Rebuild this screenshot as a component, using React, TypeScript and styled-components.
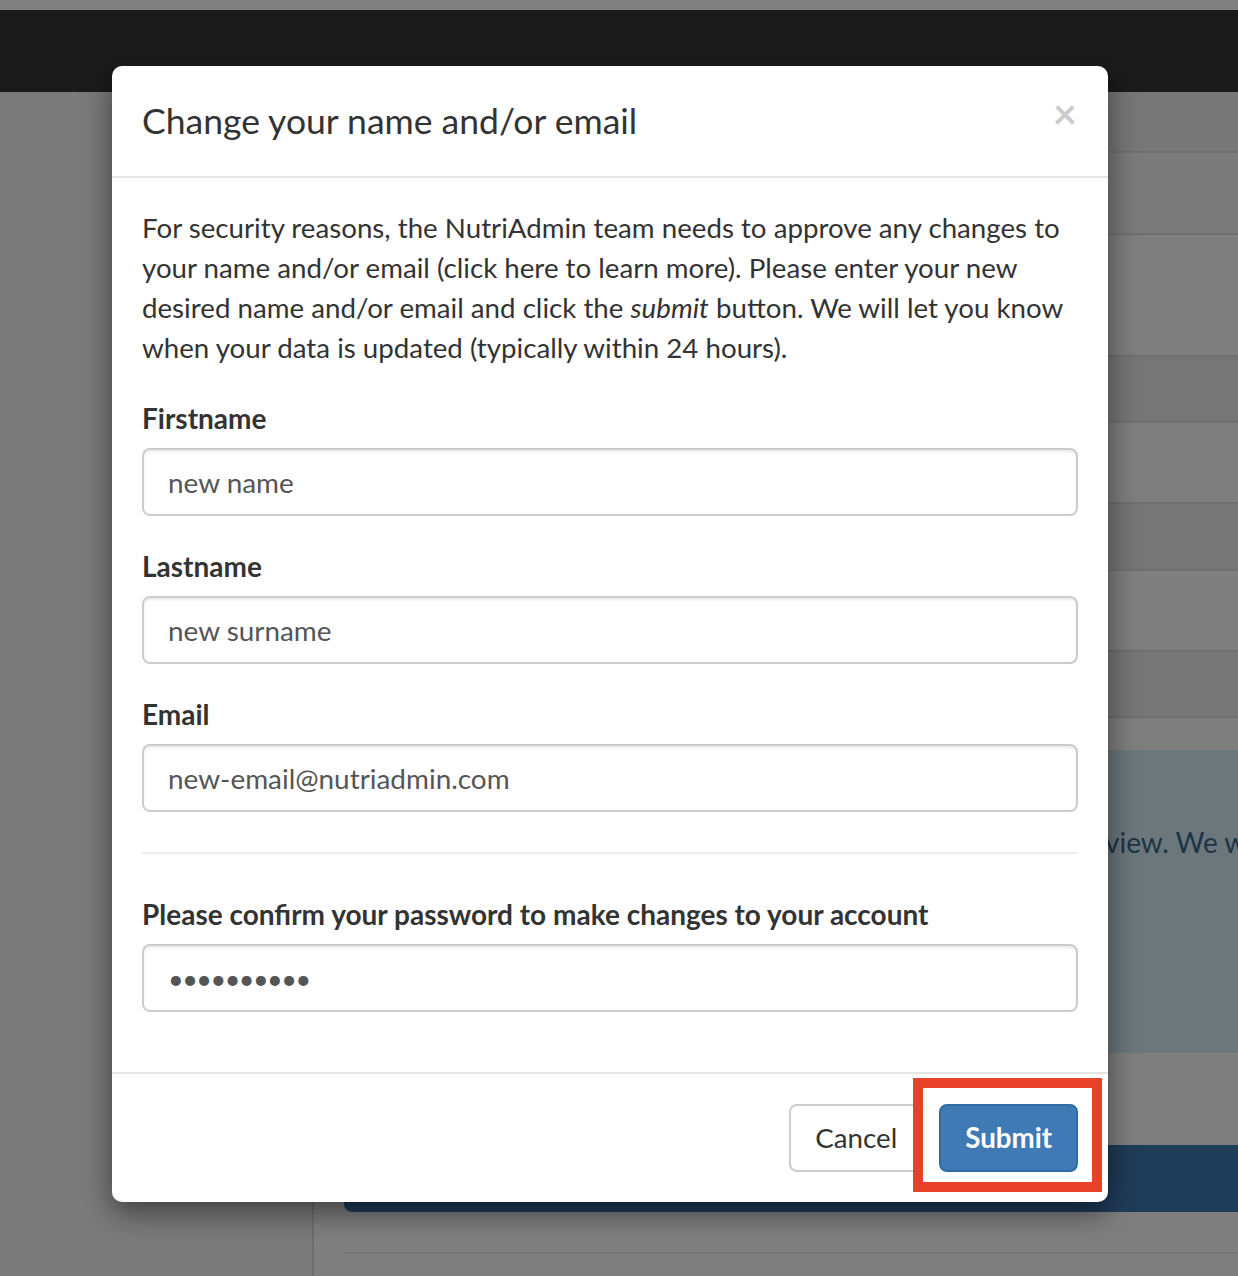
import React from "react";
import styled, { createGlobalStyle } from "styled-components";

const Global = createGlobalStyle`
  html, body { margin: 0; padding: 0; }
  body {
    background: #7f7f7f;
    font-family: Lato, "Open Sans", "Liberation Sans", sans-serif;
    overflow: hidden;
  }
  * { box-sizing: border-box; }
`;

const Page = styled.div`
  position: relative;
  width: 1238px;
  height: 1276px;
  overflow: hidden;
  background: #7f7f7f;
`;

const TopStrip = styled.div`
  height: 10px;
  background: #808080;
`;

const NavBar = styled.div`
  height: 82px;
  background: #1b1b1b;
`;

const Content = styled.div`
  display: flex;
  height: 1184px;
`;

const Sidebar = styled.aside`
  width: 314px;
  flex: none;
  background: #7b7b7b;
  border-right: 2px solid #6f6f6f;
`;

const Main = styled.main`
  flex: 1;
  padding-left: 30px;
  display: flex;
  flex-direction: column;
`;

const TableRow = styled.div<{ $h: number; $bg: string }>`
  height: ${(p) => p.$h}px;
  background: ${(p) => p.$bg};
  border-bottom: 2px solid #6f6f6f;
  flex: none;
`;

const Alert = styled.div`
  margin-top: 32px;
  height: 303px;
  background: #6c777c;
  padding: 72px 0 0 356px;
  font-size: 28px;
  line-height: 40px;
  color: #1b3446;
  white-space: nowrap;
  overflow: hidden;
`;

const PageButton = styled.div`
  margin-top: 92px;
  height: 67px;
  background: #1f3c58;
  border-radius: 8px;
`;

const Rule = styled.div`
  margin-top: 40px;
  border-top: 2px solid #767676;
`;

const Modal = styled.div`
  position: absolute;
  left: 112px;
  top: 66px;
  width: 996px;
  background: #fff;
  border-radius: 10px;
  box-shadow: 0 10px 30px rgba(0, 0, 0, 0.5);
  color: #333;
`;

const Header = styled.div`
  display: flex;
  align-items: flex-start;
  justify-content: space-between;
  padding: 29px 30px 30px;
  border-bottom: 2px solid #e5e5e5;
`;

const Title = styled.h4`
  margin: 0;
  font-size: 35.5px;
  font-weight: 400;
  line-height: 51px;
  color: #333;
`;

const Close = styled.button`
  border: 0;
  background: none;
  padding: 0;
  margin-top: -3px;
  margin-right: 1px;
  font-family: Lato, "Liberation Sans", sans-serif;
  font-size: 42px;
  font-weight: 700;
  line-height: 42px;
  color: #000;
  opacity: 0.2;
  cursor: pointer;
`;

const Body = styled.div`
  padding: 30px 30px 30px;
`;

const Intro = styled.p`
  margin: 0 0 30px;
  font-size: 27.7px;
  line-height: 40px;
`;

const Group = styled.div`
  margin-bottom: 30px;
`;

const Label = styled.label`
  display: block;
  margin-bottom: 10px;
  font-size: 28px;
  line-height: 40px;
  font-weight: 700;
`;

const Input = styled.input`
  display: block;
  width: 100%;
  height: 68px;
  padding: 12px 24px;
  font-family: Lato, "Liberation Sans", sans-serif;
  font-size: 27.9px;
  color: #555;
  background: #fff;
  border: 2px solid #ccc;
  border-radius: 8px;
  box-shadow: inset 0 2px 2px rgba(0, 0, 0, 0.075);
  outline: none;
  &[type="password"] {
    font-size: 27px;
    letter-spacing: -1.5px;
  }
`;

const Divider = styled.hr`
  margin: 40px 0;
  border: 0;
  border-top: 2px solid #eee;
`;

const Footer = styled.div`
  display: flex;
  justify-content: flex-end;
  gap: 16px;
  padding: 30px;
  border-top: 2px solid #e5e5e5;
`;

const Button = styled.button<{ $primary?: boolean }>`
  height: 68px;
  padding: 12px 24px;
  font-family: Lato, "Liberation Sans", sans-serif;
  font-size: 27.7px;
  line-height: 40px;
  font-weight: ${(p) => (p.$primary ? 700 : 400)};
  color: ${(p) => (p.$primary ? "#fff" : "#333")};
  background: ${(p) => (p.$primary ? "#3f7ab5" : "#fff")};
  border: 2px solid ${(p) => (p.$primary ? "#2e6da4" : "#ccc")};
  border-radius: 8px;
  cursor: pointer;
`;

const Highlight = styled.div`
  position: relative;
`;

const HighlightBox = styled.div`
  position: absolute;
  left: -26px;
  right: -24px;
  top: -26px;
  bottom: -20px;
  border: 10px solid #e8432a;
  pointer-events: none;
`;

const rows = [
  { h: 61, bg: "#777777" },
  { h: 82, bg: "#7b7b7b" },
  { h: 122, bg: "#7f7f7f" },
  { h: 66, bg: "#767676" },
  { h: 81, bg: "#7f7f7f" },
  { h: 67, bg: "#767676" },
  { h: 81, bg: "#7f7f7f" },
  { h: 66, bg: "#767676" },
];

export default function App() {
  return (
    <>
      <Global />
      <Page>
        <TopStrip />
        <NavBar />
        <Content>
          <Sidebar />
          <Main>
            {rows.map((r, i) => (
              <TableRow key={i} $h={r.h} $bg={r.bg} />
            ))}
            <Alert>Your request has been sent for review. We will let you know when it is done.</Alert>
            <PageButton />
            <Rule />
          </Main>
        </Content>

        <Modal role="dialog">
          <Header>
            <Title>Change your name and/or email</Title>
            <Close aria-label="Close">×</Close>
          </Header>
          <Body>
            <Intro>
              For security reasons, the NutriAdmin team needs to approve any changes to your name
              and/or email (click here to learn more). Please enter your new desired name and/or
              email and click the <em>submit</em> button. We will let you know when your data is
              updated (typically within 24 hours).
            </Intro>
            <Group>
              <Label>Firstname</Label>
              <Input defaultValue="new name" />
            </Group>
            <Group>
              <Label>Lastname</Label>
              <Input defaultValue="new surname" />
            </Group>
            <Group>
              <Label>Email</Label>
              <Input defaultValue="new-email@nutriadmin.com" />
            </Group>
            <Divider />
            <Group>
              <Label>Please confirm your password to make changes to your account</Label>
              <Input type="password" defaultValue="abcdefghij" />
            </Group>
          </Body>
          <Footer>
            <Button>Cancel</Button>
            <Highlight>
              <Button $primary>Submit</Button>
              <HighlightBox />
            </Highlight>
          </Footer>
        </Modal>
      </Page>
    </>
  );
}
